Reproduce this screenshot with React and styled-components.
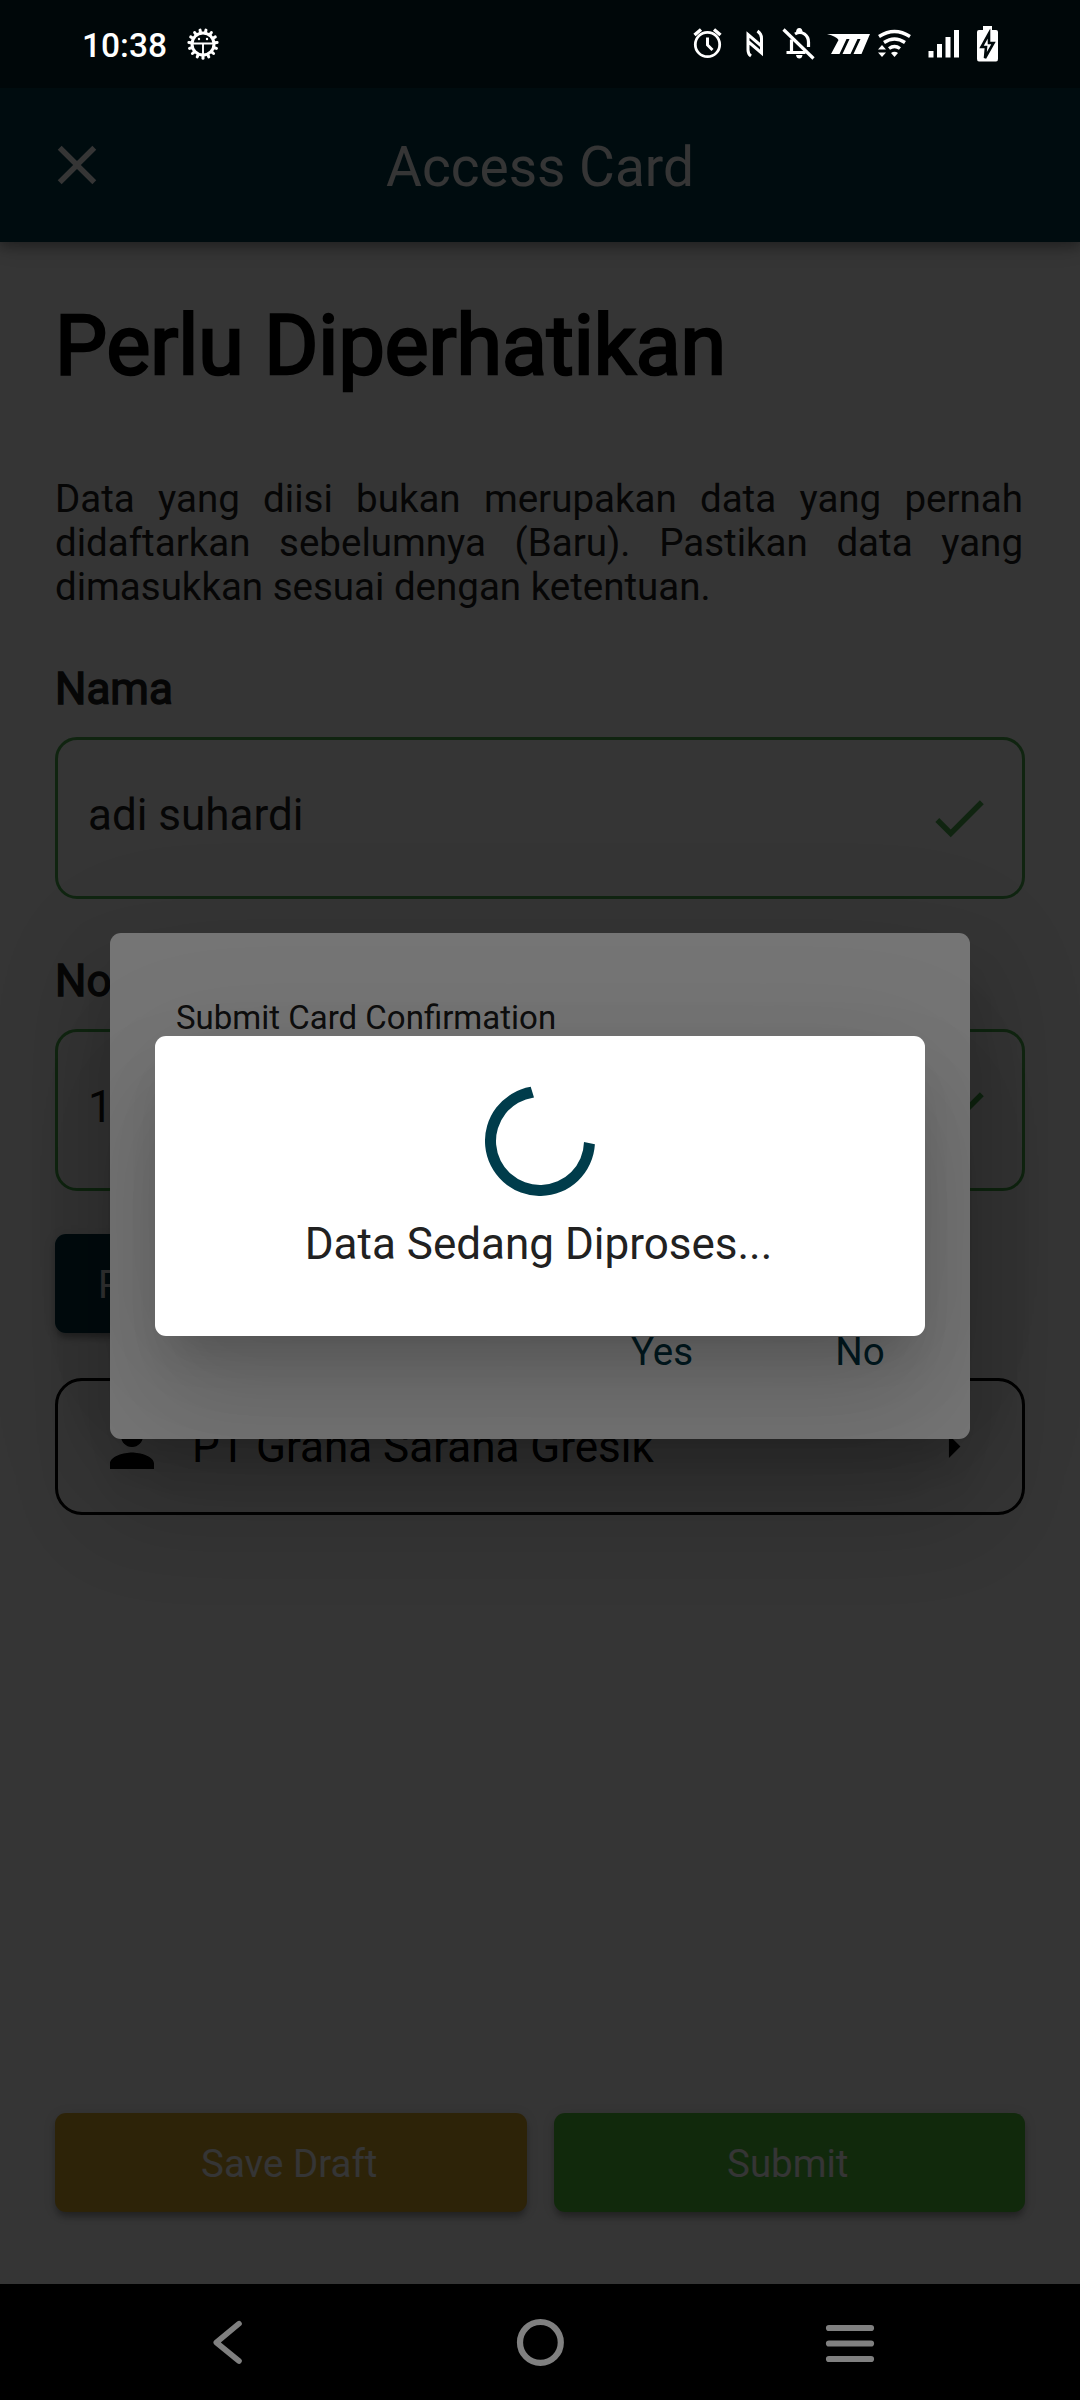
import React from "react";
import styled, { createGlobalStyle } from "styled-components";

const TEAL = "#003c4b";

const Global = createGlobalStyle`
  html, body { margin: 0; padding: 0; background: #000; }
  *, *::before, *::after { box-sizing: border-box; }
  body { font-family: Roboto, "Noto Sans", sans-serif; color: #212121; }
  h1, h2, p { margin: 0; font-weight: 400; }
  button { font-family: inherit; border: 0; padding: 0; background: none; }
  svg { display: block; flex: none; }
`;

const Phone = styled.div`
  position: relative;
  width: 1080px;
  height: 2400px;
  display: flex;
  flex-direction: column;
  overflow: hidden;
`;

const Screen = styled.div`
  flex: 1;
  display: flex;
  flex-direction: column;
  background: #fafafa;
`;

const AppBar = styled.header`
  height: 242px;
  padding: 88px 44px 0;
  display: grid;
  grid-template-columns: 66px 1fr 66px;
  align-items: center;
  background: ${TEAL};
  color: #fafafa;
  box-shadow: 0 5px 11px rgba(0, 0, 0, 0.28), 0 4px 22px rgba(0, 0, 0, 0.14);
`;

const BarTitle = styled.h1`
  font-size: 55px;
  line-height: 64px;
  text-align: center;
  padding-top: 3px;
`;

const Body = styled.main`
  flex: 1;
  padding: 0 55px 72px;
  display: flex;
  flex-direction: column;
`;

const Heading = styled.h2`
  margin-top: 52px;
  font-size: 82.5px;
  line-height: 103px;
  color: #000;
  -webkit-text-stroke: 2.6px #000;
`;

const Notice = styled.p`
  margin-top: 80px;
  padding-right: 2px;
  font-size: 38.5px;
  line-height: 44px;
  text-align: justify;
`;

const Label = styled.div`
  margin-top: ${(p) => p.$top}px;
  font-size: 44px;
  line-height: 52px;
  -webkit-text-stroke: 1.4px #212121;
`;

const Field = styled.div`
  margin-top: 22px;
  height: 162px;
  padding: 0 30px;
  display: flex;
  align-items: center;
  justify-content: space-between;
  border: 3px solid #4caf50;
  border-radius: 22px;
  font-size: 44px;
  line-height: 52px;
  color: #212121;
`;

const FieldText = styled.span`
  padding-bottom: 7px;
`;

const Button = styled.button`
  height: 99px;
  flex: ${(p) => (p.$grow ? "1" : "none")};
  align-self: flex-start;
  margin-top: ${(p) => p.$top || 0}px;
  padding: 1px 46px 0 43px;
  border-radius: 11px;
  background: ${(p) => p.$color};
  color: #fafafa;
  font-size: 38.5px;
  line-height: 45px;
  box-shadow: 0 7px 7px -3px rgba(0, 0, 0, 0.2), 0 5px 6px rgba(0, 0, 0, 0.14),
    0 2px 13px rgba(0, 0, 0, 0.1);
`;

const Company = styled.div`
  margin-top: 45px;
  height: 137px;
  padding: 0 41px;
  display: flex;
  align-items: center;
  border: 3px solid #000;
  border-radius: 27px;
  color: #000;
  font-size: 44px;
  line-height: 52px;
`;

const CompanyName = styled.span`
  flex: 1;
  padding-left: 27px;
`;

const Actions = styled.div`
  margin-top: auto;
  display: flex;
  gap: 27px;
`;

const Barrier = styled.div`
  position: absolute;
  inset: 0 0 116px;
  background: rgba(0, 0, 0, 0.54);
`;

const dialogShadow = `0 30px 41px -19px rgba(0, 0, 0, 0.16),
    0 66px 104px 8px rgba(0, 0, 0, 0.12), 0 25px 126px 14px rgba(0, 0, 0, 0.08)`;

const Confirm = styled.section`
  position: absolute;
  left: 110px;
  top: 933px;
  width: 860px;
  height: 506px;
  padding: 65px 66px 52px;
  display: flex;
  flex-direction: column;
  justify-content: space-between;
  border-radius: 11px;
  background: #fff;
  color: #212121;
  box-shadow: ${dialogShadow};
`;

const ConfirmTitle = styled.h2`
  font-size: 33px;
  line-height: 40px;
`;

const ConfirmActions = styled.div`
  display: flex;
  justify-content: flex-end;
  gap: 22px;
  margin-right: -66px;
  padding-right: 22px;
`;

const TextButton = styled.button`
  width: 176px;
  height: 72px;
  font-size: 38.5px;
  line-height: 45px;
  color: ${TEAL};
`;

const Loading = styled.section`
  position: absolute;
  left: 155px;
  top: 1036px;
  width: 770px;
  height: 300px;
  padding-top: 50px;
  display: flex;
  flex-direction: column;
  align-items: center;
  border-radius: 11px;
  background: #fff;
  box-shadow: ${dialogShadow};
`;

const LoadingText = styled.p`
  margin-top: 22px;
  padding-right: 3px;
  font-size: 44px;
  line-height: 52px;
`;

const StatusBar = styled.div`
  position: absolute;
  inset: 0 0 auto;
  height: 88px;
  padding: 0 80px 0 82px;
  display: flex;
  justify-content: space-between;
  align-items: center;
  background: rgba(0, 0, 0, 0.35);
  color: #fff;
`;

const StatusGroup = styled.div`
  display: flex;
  align-items: center;
  gap: ${(p) => p.$gap || 0}px;
`;

const Clock = styled.span`
  font-size: 33.5px;
  font-weight: 500;
  line-height: 40px;
  padding-top: 3px;
`;

const NavBar = styled.nav`
  height: 116px;
  display: grid;
  grid-template-columns: repeat(3, 310px);
  justify-content: center;
  justify-items: center;
  align-items: center;
  background: #000;
  color: #808080;
`;

const Icon = ({ d, size = 66, color = "currentColor" }) => (
  <svg width={size} height={size} viewBox="0 0 24 24" fill={color}>
    <path d={d} />
  </svg>
);

const CLOSE = "M19 6.41L17.59 5 12 10.59 6.41 5 5 6.41 10.59 12 5 17.59 6.41 19 12 13.41 17.59 19 19 17.59 13.41 12z";
const CHECK = "M9 16.17L4.83 12l-1.42 1.41L9 19 21 7l-1.41-1.41z";
const PERSON = "M12 12c2.21 0 4-1.79 4-4s-1.79-4-4-4-4 1.79-4 4 1.79 4 4 4zm0 2c-2.67 0-8 1.34-8 4v2h16v-2c0-2.66-5.33-4-8-4z";
const ARROW = "M10 17l5-5-5-5v10z";

const teeth = Array.from({ length: 15 }, (_, i) => i * 24 + 12);

const Gear = () => (
  <svg width="32" height="32" viewBox="0 0 32 32" fill="none" stroke="#fff">
    <circle cx="16" cy="16" r="11" strokeWidth="3" />
    {teeth.map((a) => (
      <path key={a} d="M16 4L16 1.800" strokeWidth="3" strokeLinecap="round" transform={`rotate(${a} 16 16)`} />
    ))}
    <path d="M6 15.500h20M16 15.500V27" strokeWidth="1.900" />
    <circle cx="12" cy="11" r="1.200" fill="#fff" stroke="none" />
    <circle cx="20" cy="11" r="1.200" fill="#fff" stroke="none" />
  </svg>
);

const StatusIcons = () => (
  <svg width="308" height="40" viewBox="692 24 308 40" fill="none" stroke="#fff">
    <g strokeWidth="2.800">
      <circle cx="707.500" cy="44.500" r="12.200" />
      <path d="M707.500 37.500v7.500l5 5" strokeWidth="3" />
      <path d="M694.500 35l6.500-5.500M720.500 35l-6.500-5.500" strokeWidth="3.400" />
    </g>
    <path d="M751 56q-3-2-3-6V34.500l14 12M757.500 31q4 3 4 7V53l-14-12" strokeWidth="3" />
    <g strokeWidth="3.200">
      <path d="M783.500 29.500l30 29" />
      <path d="M786.500 52.500h19M791.500 52V39.500M795 34q5-3 9.500 0 4 3 4 8v5" />
      <path d="M796 55h6.500q-.5 3.500-3.200 3.500t-3.300-3.500zM796 33q0-5 3.300-5t3.300 5z" fill="#fff" stroke="none" />
    </g>
    <path d="M827 34h43l-8.500 20h-8l7-15h-3l-7 15h-8l7-15h-3l-7 15h-8.500l7.500-14q-2-3.500-11.500-6z" fill="#fff" stroke="none" />
    <g strokeWidth="3.400">
      <path d="M879 36.500q15.500-10 31 0M884 42.500q10.500-7 21 0M889 48.500q5.500-4 11 0" />
      <path d="M894.500 57l-3.500-4q3.500-2.500 7 0zM882 45l4 4.500h-8zM882 57l4-4.500h-8z" fill="#fff" stroke="none" />
    </g>
    <path d="M928.500 51h5v6.500h-5zM937 44h5v13.500h-5zM945.500 37h5v20.500h-5zM954 30h5v27.500h-5z" fill="#fff" stroke="none" />
    <path d="M983 26h9v4h4q2 0 2 2v27q0 2.500-2 2.500h-17q-2 0-2-2.500V32q0-2 2-2h4z" fill="#fff" stroke="none" />
    <path d="M989 33.500l-7.500 13.500h4.500l-1 11 8.500-15h-4.500z" fill="#fff" stroke="#00090b" strokeWidth="2.600" />
  </svg>
);

const Spinner = () => (
  <svg width="110" height="110" viewBox="0 0 110 110" fill={TEAL}>
    <path d="M109.900 58.200A55 55 0 1 1 45.700.8L49 11.400A44 44 0 1 0 99 55.900z" />
  </svg>
);

export default function App() {
  return (
    <Phone>
      <Global />
      <Screen>
        <AppBar>
          <Icon d={CLOSE} />
          <BarTitle>Access Card</BarTitle>
        </AppBar>
        <Body>
          <Heading>Perlu Diperhatikan</Heading>
          <Notice>
            Data yang diisi bukan merupakan data yang pernah didaftarkan sebelumnya (Baru). Pastikan
            data yang dimasukkan sesuai dengan ketentuan.
          </Notice>
          <Label $top={54}>Nama</Label>
          <Field>
            <FieldText>adi suhardi</FieldText>
            <Icon d={CHECK} color="#4caf50" />
          </Field>
          <Label $top={56}>No</Label>
          <Field>
            <FieldText>1</FieldText>
            <Icon d={CHECK} color="#4caf50" />
          </Field>
          <Button $color={TEAL} $top={43}>P</Button>
          <Company>
            <Icon d={PERSON} />
            <CompanyName>PT Graha Sarana Gresik</CompanyName>
            <Icon d={ARROW} size={55} />
          </Company>
          <Actions>
            <Button $grow $color="#d5a72b">Save Draft</Button>
            <Button $grow $color="#55c23d">Submit</Button>
          </Actions>
        </Body>
      </Screen>
      <NavBar>
        <svg width="48" height="48" viewBox="0 0 48 48" fill="none" stroke="currentColor">
          <path d="M33 5.700L10.300 24.500 33 43" strokeWidth="5.600" strokeLinecap="round" strokeLinejoin="round" />
        </svg>
        <svg width="48" height="48" viewBox="0 0 48 48" fill="none" stroke="currentColor">
          <circle cx="24.400" cy="24.400" r="20.400" strokeWidth="6.200" />
        </svg>
        <svg width="50" height="48" viewBox="0 0 50 48" fill="none" stroke="currentColor">
          <path d="M4 10h42M4 25.500h42M4 41h42" strokeWidth="6.200" strokeLinecap="round" />
        </svg>
      </NavBar>
      <Barrier />
      <Confirm>
        <ConfirmTitle>Submit Card Confirmation</ConfirmTitle>
        <ConfirmActions>
          <TextButton>Yes</TextButton>
          <TextButton>No</TextButton>
        </ConfirmActions>
      </Confirm>
      <Barrier />
      <Loading>
        <Spinner />
        <LoadingText>Data Sedang Diproses...</LoadingText>
      </Loading>
      <StatusBar>
        <StatusGroup $gap={20}>
          <Clock>10:38</Clock>
          <Gear />
        </StatusGroup>
        <StatusIcons />
      </StatusBar>
    </Phone>
  );
}
